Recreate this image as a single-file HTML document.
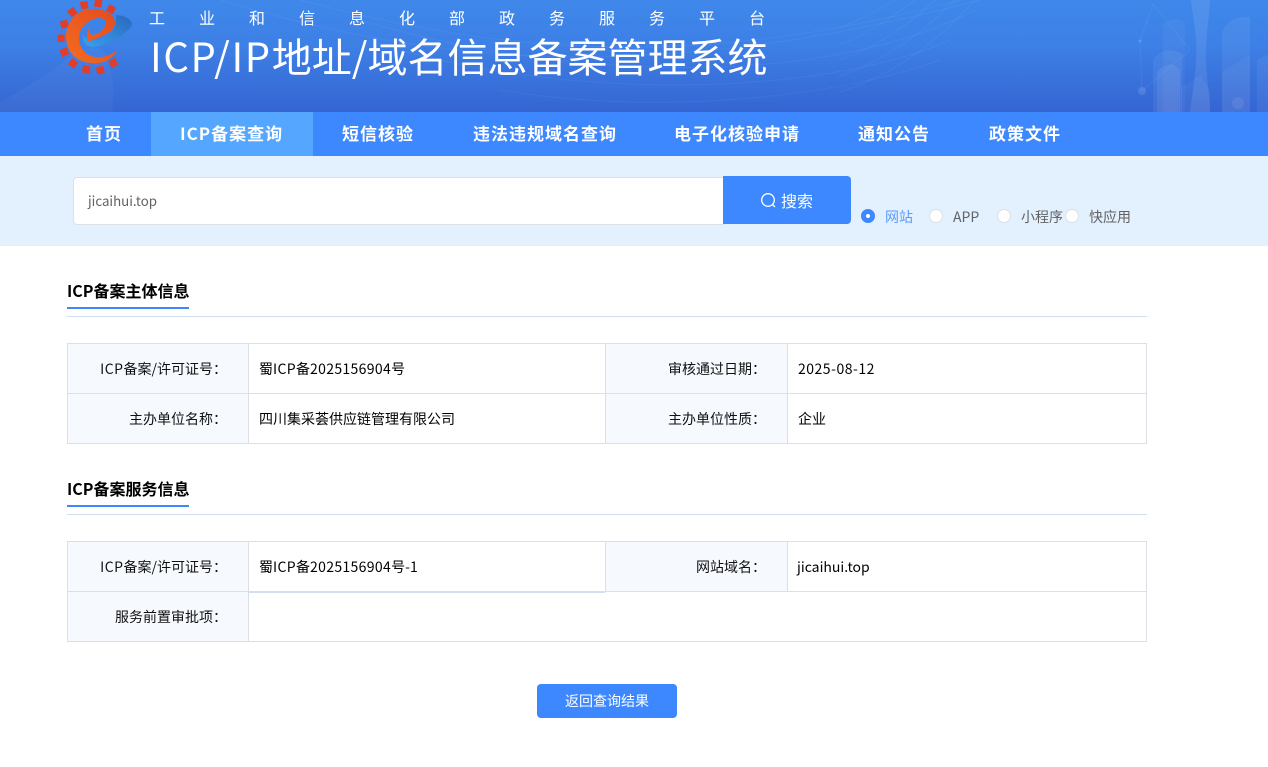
<!DOCTYPE html>
<html lang="zh-CN"><head><meta charset="utf-8"><title>ICP/IP地址/域名信息备案管理系统</title>
<style>
*{margin:0;padding:0;box-sizing:border-box}
html,body{width:1268px;height:767px;overflow:hidden;background:#fff}
body{font-family:"Noto Sans CJK SC","Liberation Sans",sans-serif;position:relative;color:#000}
.a{position:absolute;white-space:nowrap}
#hd{left:0;top:0;width:1268px;height:112px;background:linear-gradient(180deg,#3f88ea 0%,#3d80e6 40%,#3565d2 100%);overflow:hidden}
.nav{top:111px;height:44px;line-height:44px;font-size:17px;font-weight:700;color:#fff;letter-spacing:1px}
.cell{position:absolute;font-size:14px;line-height:20px;white-space:nowrap}
.lb{background:#f6f9fe;border:1px solid #dcdfe6;text-align:right;padding-right:21px;color:#111}
.v{background:#fff;border:1px solid #dcdfe6;padding-left:10px;color:#000}
.cell b{font-weight:400;letter-spacing:.5px}
.cell b.n{letter-spacing:.35px}
.h{font-size:16px;font-weight:700;left:67px;line-height:24px;color:#000}
.bl{left:67px;width:122px;height:2px;background:#3d87ff}
.gl{left:67px;width:1080px;height:1px;background:#cfdff0}
.r{width:14px;height:14px;border-radius:50%;background:#fff;border:1px solid #dcdfe6;top:209px}
.rt{top:207px;font-size:14px;line-height:20px;color:#606266}
</style></head><body>
<div class="a" id="hd">
<svg class="a" style="left:0;top:0" width="1268" height="112" viewBox="0 0 1268 112" fill="none">
<path d="M0 103L50 72Q100 30 108 60Q116 85 112 112H0Z" fill="#fff" fill-opacity=".035"/>
<g stroke="#fff" stroke-opacity=".05" stroke-width="1">
<path d="M220 0C420 60 640 90 980 0"/><path d="M300 0C480 48 680 76 960 0"/><path d="M360 20C560 80 820 90 975 10"/><path d="M400 50C600 105 840 90 950 40"/><path d="M500 90C680 120 860 90 940 60"/><path d="M840 92C880 78 920 60 975 0"/><path d="M840 76C880 62 915 40 955 0"/><path d="M840 60C870 50 905 28 935 0"/><path d="M840 44C865 36 890 18 915 0"/><path d="M840 28C855 22 875 12 895 0"/>
</g>
<g fill="#fff">
<path d="M1163 112V24Q1175 16 1185 22V112Z" fill-opacity=".04"/>
<path d="M1153 112V60Q1165 44 1182 54V112Z" fill-opacity=".06"/>
<path d="M1157 112V72Q1170 58 1180 70V112Z" fill-opacity=".07"/>
<path d="M1222 112V32Q1230 15 1250 17V112Z" fill-opacity=".06"/>
<path d="M1191 0H1210C1208 30 1204 45 1207 75 1208 90 1210 100 1210 112H1190C1193 90 1198 60 1196 40 1195 25 1192 12 1191 0Z" fill-opacity=".09"/>
<path d="M1257 112V60L1268 54V112Z" fill-opacity=".06"/>
<path d="M1181 112V88L1200 75 1210 90V112Z" fill-opacity=".04"/>
<path d="M1222 112V72L1250 55V112Z" fill-opacity=".04"/>
<circle cx="1142" cy="91" r="4" fill-opacity=".12"/><circle cx="1140" cy="41" r="1.500" fill-opacity=".15"/><circle cx="1238" cy="103" r="6" fill-opacity=".08"/>
</g>
<path d="M1140 41 1153 4 1190 50M1142 91 1140 41M1142 91 1190 50" stroke="#fff" stroke-opacity=".06"/>
</svg>
<svg class="a" style="left:51px;top:0" width="90" height="80" viewBox="0 0 90 80" fill="none">
<defs>
<linearGradient id="o" x1="0" y1="1" x2="1" y2="0"><stop offset="0" stop-color="#f36d20"/><stop offset="1" stop-color="#e4491f"/></linearGradient>
<linearGradient id="b" x1="0" y1="1" x2="1" y2="0"><stop offset="0" stop-color="#3aa0ea"/><stop offset="1" stop-color="#2a68c0"/></linearGradient>
</defs>
<g fill="#e03d2b">
<rect x="29.500" y="1.500" width="7.500" height="7.500" transform="rotate(-10 33 5)"/><rect x="43.500" y="-.5" width="7.500" height="7.500" transform="rotate(8 47 3)"/><rect x="56.500" y="5.500" width="7.500" height="7.500" transform="rotate(28 60 9)"/>
<rect x="17.500" y="8.500" width="7.500" height="7.500" transform="rotate(-35 21 12)"/><rect x="9.500" y="20.500" width="7.500" height="7.500" transform="rotate(-18 13 24)"/><rect x="6.500" y="34.500" width="7" height="7.500"/>
<rect x="9.500" y="48.500" width="7.500" height="7.500" transform="rotate(-22 13 52)"/><rect x="18.500" y="59.500" width="7.500" height="7.500" transform="rotate(35 22 63)"/><rect x="31.500" y="65.500" width="7.500" height="7.500" transform="rotate(10 35 69)"/><rect x="45.500" y="66.500" width="7.500" height="7.500" transform="rotate(-12 49 70)"/><rect x="58.500" y="59.500" width="7.500" height="7.500" transform="rotate(-30 62 63)"/>
</g>
<path d="M65 15C78 16 83 22 80 27 72 37 55 46 42 47 35 47 31 42 32 35 36 40 43 41 50 39 60 36 66 28 65 15Z" fill="url(#b)"/>
<path d="M67 50C60 61 50 64 40 63 24 62 15 50 15 37 15 21 27 9 40 9 53 8 63 14 64 22 64 28 60 32 53 35 47 38 41 41 37 41 35 37 36 32 38 28 38 33 40 35 42 35 48 34 55 28 55 22 54 19 51 18 47 18 38 19 28 27 28 38 28 48 35 56 44 57 52 58 60 55 67 50Z" fill="url(#o)"/>
</svg>
<div class="a" style="left:149px;top:5px;font-size:16px;line-height:24px;letter-spacing:34px;color:#fff">工业和信息化部政务服务平台</div>
<div class="a" style="left:150px;top:26px;font-size:40px;line-height:58px;color:#fff"><span style="letter-spacing:1.65px">ICP/IP</span>地址/域名信息备案管理系统</div>
</div>
<div class="a" style="left:0;top:112px;width:1268px;height:44px;background:#3d87ff"></div>
<div class="a" style="left:151px;top:112px;width:162px;height:44px;background:#54a6ff"></div>
<div class="a nav" style="left:86px">首页</div>
<div class="a nav" style="left:180px">ICP备案查询</div>
<div class="a nav" style="left:342px">短信核验</div>
<div class="a nav" style="left:473px">违法违规域名查询</div>
<div class="a nav" style="left:674px">电子化核验申请</div>
<div class="a nav" style="left:858px">通知公告</div>
<div class="a nav" style="left:989px">政策文件</div>

<div class="a" style="left:0;top:156px;width:1268px;height:90px;background:#e3f0fe"></div>
<div class="a" style="left:73px;top:177px;width:651px;height:48px;background:#fff;border:1px solid #dcdfe6;border-radius:4px 0 0 4px;font-size:13.3px;line-height:46px;padding-left:14px;color:#606266">jicaihui.top</div>
<div class="a" style="left:723px;top:176px;width:128px;height:48px;background:#3d87ff;border-radius:0 4px 4px 0;color:#fff;font-size:16px;line-height:48px;padding-left:58px">搜索</div>
<svg class="a" style="left:760px;top:192px" width="17" height="17" viewBox="0 0 17 17" fill="none" stroke="#fff" stroke-width="1.300"><circle cx="8" cy="8" r="6.300"/><path d="M12.500 12.500 15 15"/></svg>
<div class="a" style="left:861px;top:209px;width:14px;height:14px;border-radius:50%;background:#3d87ff"></div>
<div class="a" style="left:866px;top:214px;width:4px;height:4px;border-radius:50%;background:#fff"></div>
<div class="a rt" style="left:885px;color:#5a9cff">网站</div>
<div class="a r" style="left:929px"></div><div class="a rt" style="left:953px">APP</div>
<div class="a r" style="left:997px"></div><div class="a rt" style="left:1021px">小程序</div>
<div class="a r" style="left:1065px"></div><div class="a rt" style="left:1089px">快应用</div>

<div class="a h" style="top:278px">ICP备案主体信息</div>
<div class="a bl" style="top:307px"></div><div class="a gl" style="top:316px"></div>
<div class="cell lb" style="left:67px;top:343px;width:182px;height:51px;line-height:50px"><b>ICP</b>备案/许可证号：</div>
<div class="cell v" style="left:248px;top:343px;width:358px;height:51px;line-height:50px">蜀<b class="n">ICP</b>备<b class="n">2025156904</b>号</div>
<div class="cell lb" style="left:605px;top:343px;width:183px;height:51px;line-height:50px">审核通过日期：</div>
<div class="cell v" style="left:787px;top:343px;width:360px;height:51px;line-height:50px"><b>2025-08-12</b></div>
<div class="cell lb" style="left:67px;top:393px;width:182px;height:51px;line-height:50px">主办单位名称：</div>
<div class="cell v" style="left:248px;top:393px;width:358px;height:51px;line-height:50px">四川集采荟供应链管理有限公司</div>
<div class="cell lb" style="left:605px;top:393px;width:183px;height:51px;line-height:50px">主办单位性质：</div>
<div class="cell v" style="left:787px;top:393px;width:360px;height:51px;line-height:50px">企业</div>

<div class="a h" style="top:476px">ICP备案服务信息</div>
<div class="a bl" style="top:505px"></div><div class="a gl" style="top:514px"></div>
<div class="cell lb" style="left:67px;top:541px;width:182px;height:51px;line-height:50px"><b>ICP</b>备案/许可证号：</div>
<div class="cell v" style="left:248px;top:541px;width:358px;height:51px;line-height:50px">蜀<b class="n">ICP</b>备<b class="n">2025156904</b>号-1</div>
<div class="cell lb" style="left:605px;top:541px;width:183px;height:51px;line-height:50px">网站域名：</div>
<div class="cell v" style="left:787px;top:541px;width:360px;height:51px;line-height:50px;padding-left:9px">jicaihui.top</div>
<div class="cell lb" style="left:67px;top:591px;width:182px;height:51px;line-height:50px">服务前置审批项：</div>
<div class="cell v" style="left:248px;top:591px;width:899px;height:51px"></div>
<div class="a" style="left:249px;top:591px;width:356px;height:2px;background:#d2dff0"></div>
<div class="a" style="left:537px;top:684px;width:140px;height:34px;background:#3d87ff;border-radius:4px;color:#fff;font-size:14px;line-height:34px;text-align:center">返回查询结果</div>
</body></html>
